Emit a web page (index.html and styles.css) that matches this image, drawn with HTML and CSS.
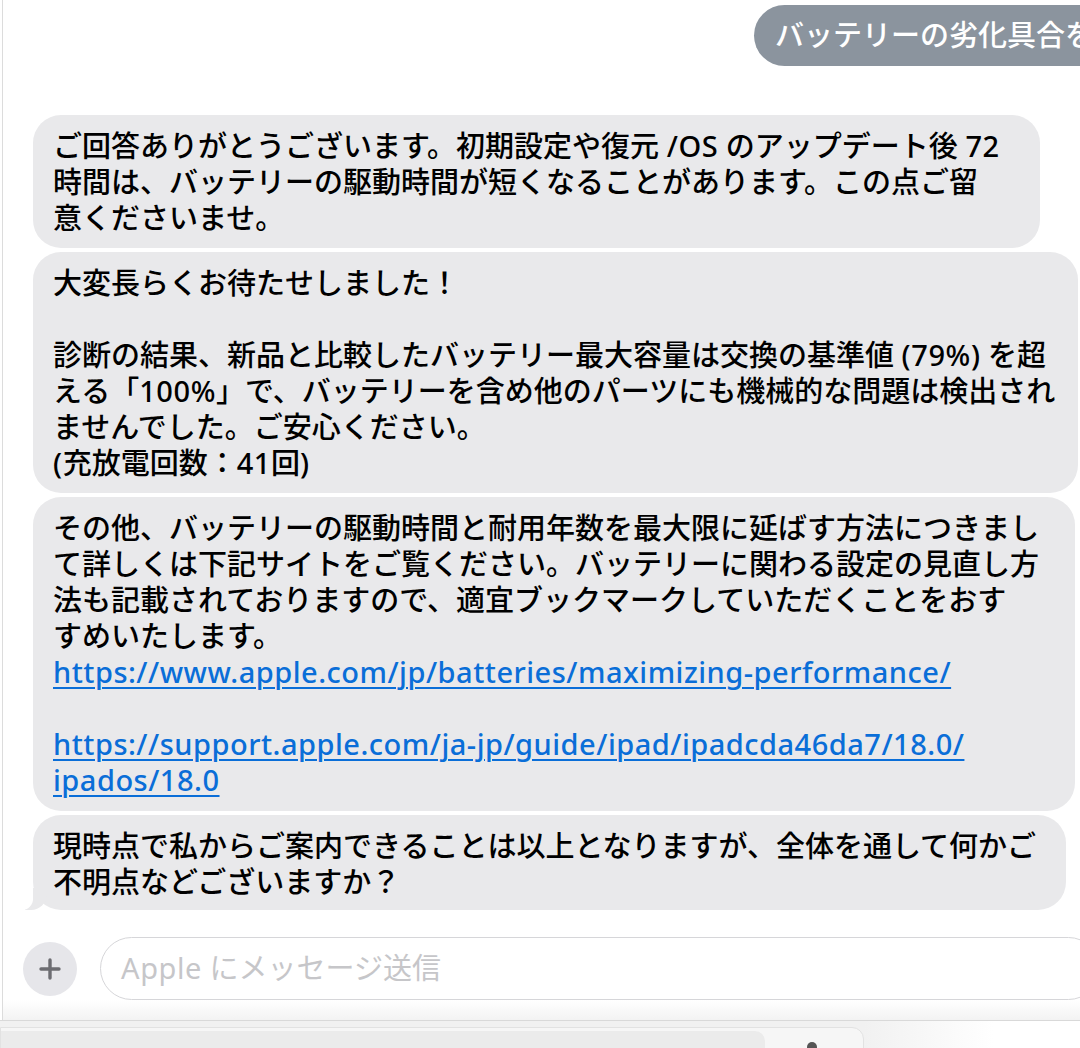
FILE: index.html
```html
<!DOCTYPE html>
<html lang="ja">
<head>
<meta charset="utf-8">
<title>Apple サポート</title>
<link rel="stylesheet" href="styles.css">
</head>
<body>
<div class="screen">
  <main class="thread">
    <div class="out-row">
      <div class="bubble-out">バッテリーの劣化具合を確認していただけますか</div>
    </div>
    <div class="bubble b1">ご回答ありがとうございます。初期設定や復元 <span class="lat">/OS</span> のアップデート後 <span class="lat">72</span><br>時間は、バッテリーの駆動時間が短くなることがあります。この点ご留<br>意くださいませ。</div>
    <div class="bubble b2">大変長らくお待たせしました！<br><br>診断の結果、新品と比較したバッテリー最大容量は交換の基準値 <span class="lat">(79%)</span> を超<br>える「<span class="lat">100%</span>」で、バッテリーを含め他のパーツにも機械的な問題は検出され<br>ませんでした。ご安心ください。<br><span class="lat">(</span>充放電回数：<span class="lat">41</span>回<span class="lat">)</span></div>
    <div class="bubble b3">その他、バッテリーの駆動時間と耐用年数を最大限に延ばす方法につきまし<br>て詳しくは下記サイトをご覧ください。バッテリーに関わる設定の見直し方<br>法も記載されておりますので、適宜ブックマークしていただくことをおす<br>すめいたします。<br><a href="#">https://www.apple.com/jp/batteries/maximizing-performance/</a><br><br><a href="#">https://support.apple.com/ja-jp/guide/ipad/ipadcda46da7/18.0/<br>ipados/18.0</a></div>
    <div class="bubble b4 tail">現時点で私からご案内できることは以上となりますが、全体を通して何かご<br>不明点などございますか？</div>
  </main>
  <div class="composer">
    <button class="plus" aria-label="追加">
      <svg width="22" height="22" viewBox="0 0 22 22"><path d="M11 2v18M2 11h18" stroke="#6d6d72" stroke-width="3.4" stroke-linecap="round"/></svg>
    </button>
    <div class="field"><span class="lat">Apple</span> にメッセージ送信</div>
  </div>
  <div class="fade"></div>
</div>
<div class="dock">
  <div class="dock-panel"><div class="dock-field"></div><span class="dock-dot"></span></div>
</div>
</body>
</html>
```
FILE: styles.css
```css
html, body {
  margin: 0;
  padding: 0;
}
body {
  width: 1080px;
  height: 1048px;
  overflow: hidden;
  background: #ffffff;
  font-family: "Noto Sans", "Noto Sans CJK JP", sans-serif;
  -webkit-font-smoothing: antialiased;
}
.screen {
  height: 1020px;
  margin-left: 2px;
  border-left: 1px solid #dcdcdc;
  display: flex;
  flex-direction: column;
  box-sizing: border-box;
}
.thread {
  display: flex;
  flex-direction: column;
  gap: 4px;
  padding-left: 30px;
  padding-top: 5px;
}
.out-row {
  padding-left: 721px;
  margin-bottom: 45px;
  white-space: nowrap;
}
.bubble-out {
  display: inline-block;
  background: #8b949e;
  color: #ffffff;
  font-size: 29px;
  font-weight: 500;
  line-height: 36px;
  padding: 12px 22px 13px 21px;
  border-radius: 31px;
}
.bubble {
  position: relative;
  box-sizing: border-box;
  background: #e9e9eb;
  color: #000000;
  font-size: 29px;
  font-weight: 500;
  line-height: 36px;
  white-space: nowrap;
  padding: 13px 20px 12px 20px;
  border-radius: 28px;
}
.lat {
  letter-spacing: 0.6px;
}
.b1 { width: 1007px; height: 133px; }
.b2 { width: 1045px; height: 241px; }
.b3 { width: 1042px; height: 314px; }
.b4 { width: 1033px; height: 95px; }
.bubble a {
  color: #0a6ed8;
  letter-spacing: 0.5px;
  text-decoration: underline;
  text-decoration-thickness: 2px;
  text-underline-offset: 4px;
}
.tail::before {
  content: "";
  position: absolute;
  bottom: 0;
  left: -8px;
  width: 22px;
  height: 22px;
  background: #e9e9eb;
  border-bottom-right-radius: 16px;
}
.tail::after {
  content: "";
  position: absolute;
  bottom: 0;
  left: -14px;
  width: 14px;
  height: 22px;
  background: #ffffff;
  border-bottom-right-radius: 11px;
}
.composer {
  display: flex;
  align-items: center;
  gap: 23px;
  padding-left: 20px;
  margin-top: 27px;
}
.plus {
  width: 54px;
  height: 54px;
  border-radius: 50%;
  border: none;
  background: #e6e6ea;
  display: flex;
  align-items: center;
  justify-content: center;
  padding: 0;
  flex: none;
}
.field {
  flex: none;
  width: 1000px;
  height: 63px;
  box-sizing: border-box;
  border: 1.5px solid #d6d6d9;
  border-radius: 32px;
  padding-left: 20px;
  font-size: 29px;
  line-height: 60px;
  color: #c6c6c9;
  font-weight: 400;
  white-space: nowrap;
}
.fade {
  flex: 1;
  background: linear-gradient(#ffffff, #f3f3f3);
}
.dock {
  height: 28px;
  border-top: 1px solid #d9d9d9;
  background: linear-gradient(90deg, #f1f1f1 0%, #f1f1f1 80%, #ffffff 92%);
  padding-top: 6px;
  box-sizing: border-box;
}
.dock-panel {
  position: relative;
  width: 864px;
  height: 30px;
  box-sizing: border-box;
  background: #f6f6f6;
  border: 1px solid #e2e2e2;
  border-radius: 0 12px 0 0;
  padding-top: 3px;
}
.dock-field {
  width: 764px;
  height: 30px;
  background: #ebebeb;
  border-radius: 0 10px 0 0;
}
.dock-dot {
  position: absolute;
  left: 806px;
  top: 14px;
  width: 10px;
  height: 10px;
  border-radius: 50%;
  background: #555;
}
```
